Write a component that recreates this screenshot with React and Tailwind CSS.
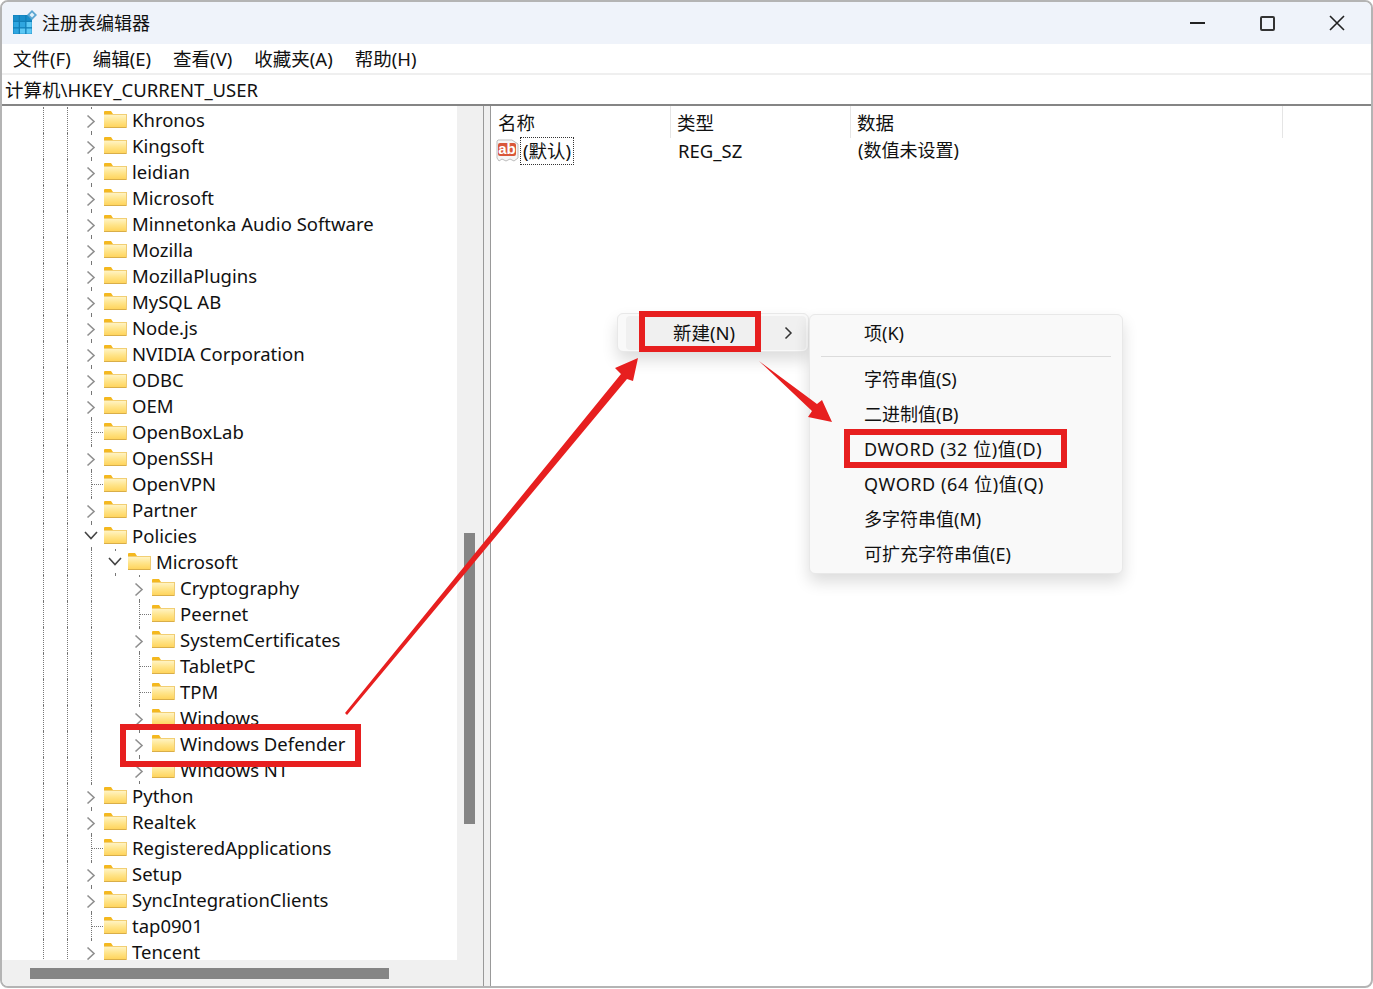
const FONT = '"Noto Sans", "Noto Sans CJK SC", sans-serif';

const menus = ["文件(F)", "编辑(E)", "查看(V)", "收藏夹(A)", "帮助(H)"];

// type: c = 折叠, o = 展开, l = 叶子; guides = 前面的虚线列
const top = [1, 1];
const mid = [1, 1, 1];
const deep = [1, 1, 1, 0];
const rows = [
  ["Khronos", "c", top],
  ["Kingsoft", "c", top],
  ["leidian", "c", top],
  ["Microsoft", "c", top],
  ["Minnetonka Audio Software", "c", top],
  ["Mozilla", "c", top],
  ["MozillaPlugins", "c", top],
  ["MySQL AB", "c", top],
  ["Node.js", "c", top],
  ["NVIDIA Corporation", "c", top],
  ["ODBC", "c", top],
  ["OEM", "c", top],
  ["OpenBoxLab", "l", top],
  ["OpenSSH", "c", top],
  ["OpenVPN", "l", top],
  ["Partner", "c", top],
  ["Policies", "o", top],
  ["Microsoft", "o", mid],
  ["Cryptography", "c", deep],
  ["Peernet", "l", deep],
  ["SystemCertificates", "c", deep],
  ["TabletPC", "l", deep],
  ["TPM", "l", deep],
  ["Windows", "c", deep],
  ["Windows Defender", "c", deep],
  ["Windows NT", "c", deep],
  ["Python", "c", top],
  ["Realtek", "c", top],
  ["RegisteredApplications", "l", top],
  ["Setup", "c", top],
  ["SyncIntegrationClients", "c", top],
  ["tap0901", "l", top],
  ["Tencent", "c", top],
];

const subItems = [
  ["字符串值(S)", ""],
  ["二进制值(B)", ""],
  ["DWORD (32 位)值(D)", "tracking-[0.6px]"],
  ["QWORD (64 位)值(Q)", "tracking-[0.6px]"],
  ["多字符串值(M)", ""],
  ["可扩充字符串值(E)", ""],
];

const Folder = () => (
  <svg width="23" height="18" viewBox="0 0 23 18" className="ml-px shrink-0">
    <defs>
      <linearGradient id="folderBody" x1="0" y1="0" x2="0" y2="1">
        <stop offset="0" stopColor="#fff6cc" />
        <stop offset="0.5" stopColor="#ffe48a" />
        <stop offset="1" stopColor="#ffd255" />
      </linearGradient>
    </defs>
    <path d="M0 1 Q0 0 1 0 H7 L9 3 H0 Z" fill="#f4b81f" />
    <rect x="0" y="3" width="23" height="14" fill="url(#folderBody)" />
    <rect x="0" y="3" width="23" height="1" fill="#f2cf73" />
    <rect x="0" y="16" width="23" height="1" fill="#d9ae49" />
    <rect x="22" y="3" width="1" height="14" fill="#eecb74" />
  </svg>
);

const GuideCell = ({ on }) => (
  <span className="flex h-full w-6 shrink-0 pl-3">
    {on ? <span className="h-full border-l border-dotted border-[#777]" /> : null}
  </span>
);

const Toggle = ({ type }) => {
  if (type === "l") {
    return (
      <span className="flex h-full w-6 shrink-0 pl-3">
        <span className="h-full border-l border-dotted border-[#777]" />
        <span className="w-[11px] self-center border-t border-dotted border-[#777]" />
      </span>
    );
  }
  return (
    <span className="flex h-full w-6 shrink-0 flex-col pl-3">
      <span className="h-[2px] border-l border-dotted border-[#777]" />
      <span className="-ml-3 flex h-[22px] w-6 items-center justify-center bg-white">
        {type === "c" ? (
          <svg width="10" height="15" viewBox="0 0 10 15" fill="none" className="mt-[2px]">
            <path d="M1.5 1.5 L8 7.5 L1.5 13.5" stroke="#8f8f8f" strokeWidth="1.6" />
          </svg>
        ) : (
          <svg width="14" height="9" viewBox="0 0 14 9" fill="none" className="-mt-[1px]">
            <path d="M1 1 L7 7.5 L13 1" stroke="#444" strokeWidth="1.6" />
          </svg>
        )}
      </span>
      <span className="h-[2px] border-l border-dotted border-[#777]" />
    </span>
  );
};

const TreeRow = ({ name, type, guides }) => (
  <div className="flex h-[26px] shrink-0 items-center whitespace-nowrap">
    {guides.map((on, i) => (
      <GuideCell key={i} on={on} />
    ))}
    <Toggle type={type} />
    <Folder />
    <span className="ml-[5px] text-[18.5px] leading-[26px] text-[#111]">{name}</span>
  </div>
);

const RegIcon = () => (
  <svg width="26" height="26" viewBox="0 0 26 26" className="-mt-[2px] shrink-0">
    <rect x="1" y="6" width="19" height="19" fill="#117fb8" />
    {[1, 7.5, 14].flatMap((x, i) =>
      [6, 12.5, 19].map((y, j) => (
        <rect
          key={`${i}-${j}`}
          x={x + 0.5}
          y={y + 0.5}
          width="5.2"
          height="5.2"
          fill={j === 0 ? "#1a8fcb" : i + j > 2 ? "#5cc8f5" : "#2fa6e0"}
        />
      ))
    )}
    <path d="M20 1 L25 6 L20 11 L15 6 Z" fill="#5aa5d2" />
    <path d="M20 3.5 L22.5 6 L20 8.5 L17.5 6 Z" fill="#dff1fb" />
  </svg>
);

const AbIcon = () => (
  <svg width="23" height="23" viewBox="0 0 23 23" className="shrink-0">
    <path
      d="M2 1 H16 L22 5 V19 L18 22 L14 20 L10 22 L6 20 L3 22 L1 19 V2 Z"
      fill="#f6f6f6"
      stroke="#bdbdbd"
      strokeWidth="1"
    />
    <rect x="2" y="4" width="18" height="13" rx="2" fill="#d9573a" />
    <text x="11" y="15" textAnchor="middle" fontSize="15" fontWeight="700" fill="#fff" fontFamily="Liberation Sans, sans-serif">
      ab
    </text>
  </svg>
);

const RedBox = ({ className }) => (
  <div className={`pointer-events-none absolute border-[6px] border-[#e71f1f] ${className}`} />
);

export default function App() {
  return (
    <div
      className="relative h-[989px] w-[1373px] overflow-hidden bg-white text-black"
      style={{ fontFamily: FONT }}
    >
      <div className="flex h-[988px] flex-col overflow-hidden rounded-lg border-2 border-[#b4b4b4] bg-white">
        {/* title bar */}
        <div className="flex h-[42px] shrink-0 items-center bg-[#eff3fa] pl-[10px]">
          <RegIcon />
          <span className="ml-[4px] text-[18px] text-[#111]">注册表编辑器</span>
          <div className="-mr-px ml-auto flex">
            <div className="flex h-[42px] w-[70px] items-center justify-center">
              <div className="h-[1.5px] w-[15px] bg-[#222]" />
            </div>
            <div className="flex h-[42px] w-[70px] items-center justify-center">
              <div className="h-[15px] w-[15px] rounded-[2px] border-2 border-[#333]" />
            </div>
            <div className="flex h-[42px] w-[70px] items-center justify-center">
              <svg width="16" height="16" viewBox="0 0 16 16" fill="none">
                <path d="M1 1 L15 15 M15 1 L1 15" stroke="#222" strokeWidth="1.6" />
              </svg>
            </div>
          </div>
        </div>

        {/* menu bar */}
        <div className="flex h-[29px] shrink-0 items-center gap-[22px] pl-[11px] text-[18.5px] text-[#111]">
          {menus.map((m) => (
            <span key={m}>{m}</span>
          ))}
        </div>

        {/* address bar */}
        <div className="flex h-[31px] shrink-0 items-center border-t-2 border-[#efefef] pl-[3px] text-[18.5px] text-[#111]">
          计算机\HKEY_CURRENT_USER
        </div>

        {/* panes */}
        <div className="flex min-h-0 flex-1 border-t-2 border-[#858585]">
          <div className="flex w-[482px] shrink-0 flex-col border-r border-[#999]">
            <div className="flex min-h-0 flex-1">
              <div className="flex min-w-0 flex-1 flex-col overflow-hidden pl-[29px] pt-[1px]">
                {rows.map(([name, type, guides], i) => (
                  <TreeRow key={i} name={name} type={type} guides={guides} />
                ))}
              </div>
              <div className="w-[26px] shrink-0 bg-[#f0f0f0]">
                <div className="ml-[7px] mt-[427px] h-[291px] w-[11px] bg-[#858585]" />
              </div>
            </div>
            <div className="flex h-[26px] shrink-0 items-center bg-[#f0f0f0]">
              <div className="ml-[28px] h-[11px] w-[359px] bg-[#858585]" />
            </div>
          </div>

          <div className="w-[7px] shrink-0 border-r border-[#999] bg-[#f0f0f0]" />

          <div className="min-w-0 flex-1 text-[18.5px] text-[#111]">
            <div className="flex h-[32px]">
              <div className="w-[180px] border-r border-[#e5e5e5] pl-[7px] leading-[34px]">名称</div>
              <div className="w-[180px] border-r border-[#e5e5e5] pl-[6px] leading-[34px]">类型</div>
              <div className="w-[432px] border-r border-[#e5e5e5] pl-[6px] leading-[34px]">数据</div>
            </div>
            <div className="flex h-[25px] items-center">
              <div className="flex w-[180px] items-center pl-[5px]">
                <AbIcon />
                <span className="ml-[1px] border border-dotted border-[#333] px-[2px] leading-[26px]">(默认)</span>
              </div>
              <div className="w-[180px] pl-[7px]">REG_SZ</div>
              <div className="pl-[7px] text-[18px]">(数值未设置)</div>
            </div>
          </div>
        </div>
      </div>

      {/* context menu */}
      <div className="absolute left-[617px] top-[313px] flex h-[39px] w-[192px] items-center rounded-md border border-[#e8e8e8] bg-[#f9f9f9] pl-[8px] shadow-[0_8px_16px_rgba(0,0,0,0.14)]">
        <div className="flex h-[34px] w-[180px] items-center rounded-[4px] bg-[#f0f0f0] pl-[47px] text-[18.5px] text-[#111]">
          新建(N)
          <svg width="9" height="14" viewBox="0 0 9 14" fill="none" className="ml-[49px]">
            <path d="M1.5 1.5 L7 7 L1.5 12.5" stroke="#333" strokeWidth="1.5" />
          </svg>
        </div>
      </div>

      {/* submenu */}
      <div className="absolute left-[809px] top-[314px] flex h-[260px] w-[314px] flex-col rounded-md border border-[#e8e8e8] bg-[#f9f9f9] pt-[1px] text-[18px] text-[#111] shadow-[0_8px_16px_rgba(0,0,0,0.14)]">
        <div className="flex h-[35px] items-center pl-[54px]">项(K)</div>
        <div className="mx-[11px] mb-[5px] mt-[5px] h-px bg-[#dcdcdc]" />
        {subItems.map(([s, extra]) => (
          <div key={s} className={`flex h-[35px] shrink-0 items-center pl-[54px] ${extra}`}>
            {s}
          </div>
        ))}
      </div>

      {/* red annotations */}
      <RedBox className="left-[639px] top-[311px] h-[41px] w-[122px]" />
      <RedBox className="left-[120px] top-[724px] h-[43px] w-[241px]" />
      <RedBox className="left-[844px] top-[429px] h-[39px] w-[223px]" />
      <svg className="pointer-events-none absolute left-0 top-0" width="1373" height="989" viewBox="0 0 1373 989">
        <path d="M345 713 L621 374 L615 368 L638 358 L633 381 L627 379 L347 715 Z" fill="#e71f1f" />
        <path d="M759 361 L817 404 L822 400 L832 422 L808 417 L812 411 Z" fill="#e71f1f" />
      </svg>
    </div>
  );
}
